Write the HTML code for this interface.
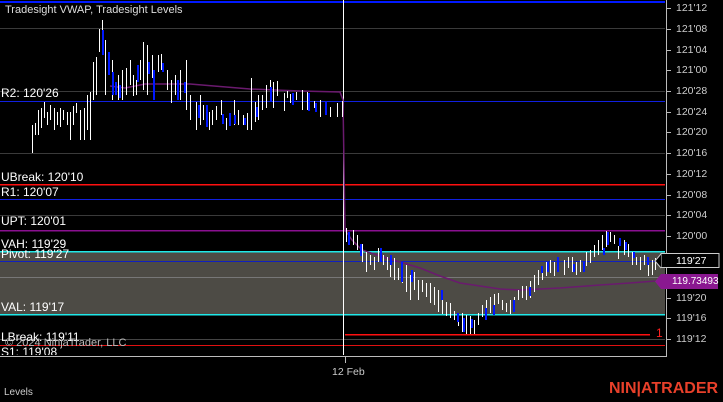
<!DOCTYPE html>
<html><head><meta charset="utf-8"><style>
html,body{margin:0;padding:0;background:#000;}
body{width:723px;height:402px;overflow:hidden;position:relative;font-family:"Liberation Sans",sans-serif;}
.t{position:absolute;white-space:nowrap;}
</style></head><body>
<svg width="723" height="402" style="position:absolute;left:0;top:0">
<rect x="0" y="251" width="665" height="63" fill="#4d4b45"/>
<g stroke-width="1" shape-rendering="crispEdges">
<line x1="0" y1="2" x2="665" y2="2" stroke="#0018ff" stroke-width="2"/>
<line x1="0" y1="28.5" x2="665" y2="28.5" stroke="#3a3a3a"/>
<line x1="0" y1="91.5" x2="665" y2="91.5" stroke="#3a3a3a"/>
<line x1="0" y1="101.5" x2="665" y2="101.5" stroke="#1020e0"/>
<line x1="0" y1="153.5" x2="665" y2="153.5" stroke="#3a3a3a"/>
<line x1="0" y1="184.5" x2="665" y2="184.5" stroke="#ff1010" stroke-width="1.5"/>
<line x1="0" y1="199.5" x2="665" y2="199.5" stroke="#1020e0"/>
<line x1="0" y1="215.5" x2="665" y2="215.5" stroke="#3a3a3a"/>
<line x1="0" y1="230.5" x2="665" y2="230.5" stroke="#8a1090" stroke-width="1.5"/>
<line x1="0" y1="251.5" x2="665" y2="251.5" stroke="#20e8e8" stroke-width="1.5"/>
<line x1="0" y1="261.5" x2="665" y2="261.5" stroke="#1020c0"/>
<line x1="0" y1="277.5" x2="665" y2="277.5" stroke="#777"/>
<line x1="0" y1="314.5" x2="665" y2="314.5" stroke="#20e8e8" stroke-width="1.5"/>
<line x1="0" y1="339.5" x2="665" y2="339.5" stroke="#444"/>
<line x1="0" y1="345.5" x2="665" y2="345.5" stroke="#e01010"/>
<line x1="345" y1="334.5" x2="650" y2="334.5" stroke="#ff1010" stroke-width="1.5"/>
<line x1="343.5" y1="0" x2="343.5" y2="355" stroke="#fff"/>
<line x1="0" y1="356.5" x2="666" y2="356.5" stroke="#bbb"/>
<line x1="666.5" y1="0" x2="666.5" y2="357" stroke="#bbb"/>
<line x1="345.5" y1="357" x2="345.5" y2="363" stroke="#bbb"/>
</g>
<g stroke="#bbb" shape-rendering="crispEdges">
<line x1="667" y1="8.5" x2="671" y2="8.5"/><line x1="667" y1="29.5" x2="671" y2="29.5"/><line x1="667" y1="50.5" x2="671" y2="50.5"/><line x1="667" y1="70.5" x2="671" y2="70.5"/><line x1="667" y1="91.5" x2="671" y2="91.5"/><line x1="667" y1="112.5" x2="671" y2="112.5"/><line x1="667" y1="132.5" x2="671" y2="132.5"/><line x1="667" y1="153.5" x2="671" y2="153.5"/><line x1="667" y1="174.5" x2="671" y2="174.5"/><line x1="667" y1="195.5" x2="671" y2="195.5"/><line x1="667" y1="215.5" x2="671" y2="215.5"/><line x1="667" y1="236.5" x2="671" y2="236.5"/><line x1="667" y1="298.5" x2="671" y2="298.5"/><line x1="667" y1="318.5" x2="671" y2="318.5"/><line x1="667" y1="339.5" x2="671" y2="339.5"/>
</g>
<polyline fill="none" stroke="#6a1a6e" stroke-width="1.5" points="110,86 125,88 145,84 190,84 250,89 300,91 340,92 343,100 345,230 352,240 362,250 380,256 400,262 420,268 440,276 460,283 480,286 500,289 520,290 560,288 600,285 630,283 655,281"/>
<g stroke="#fff" stroke-width="1" shape-rendering="crispEdges" transform="translate(0.5,0)">
<path d="M32 125V153M35 123V135M38 110V135M41 108V128M44 102V118M47 112V125M50 105V120M54 108V130M57 112V125M60 108V127M63 110V120M67 112V125M70 112V140M73 106V125M76 103V113M80 110V140M84 108V140M87 95V130M90 92V140M93 62V100M96 57V95M99 29V52M102 20V45M105 40V95M112 60V100M118 75V100M122 70V100M126 68V95M130 60V85M133 75V96M136 80V95M140 60V80M143 42V90M147 45V95M152 55V78M158 55V72M161 54V70M167 70V90M171 80V103M175 75V95M180 70V100M186 60V110M190 95V120M196 102V130M200 95V125M203 105V120M209 112V130M212 110V125M216 106V120M221 100V115M226 118V130M234 100V125M238 110V125M243 115V125M247 113V130M251 78V130M255 102V122M258 95V120M262 95V110M266 85V108M270 80V100M273 82V108M277 81V96M284 93V111M287 91V98M290 94V103M296 92V100M302 90V110M307 92V110M314 101V108M320 100V117M330 107V117M337 103V117M342 101V117"/>
<path d="M346 228V242M349 232V245M353 230V245M357 235V250M362 244V262M366 252V272M370 255V265M374 257V270M378 248V262M383 255V265M387 257V270M390 260V277M394 258V280M398 268V280M402 270V283M406 265V292M410 275V300M414 272V290M418 280V300M422 280V292M426 283V297M430 283V303M434 287V305M438 290V312M442 297V314M446 302V316M450 303V318M454 311V320M458 314V326M462 313V332M466 315V334M470 316V334M474 320V334M478 313V325M482 305V317M486 300V315M490 297V313M494 294V307M498 293V304M502 300V310M506 303V312M510 300V314M514 297V312M518 290V300M522 286V298M526 286V300M530 281V298M534 275V292M538 270V285M542 268V280M546 262V276M550 260V273M554 262V276M558 259V269M564 260V275M568 257V268M572 257V272M576 262V275M580 260V272M586 252V266M590 250V263M594 245V257M598 240V255M602 235V250M606 231V247M610 232V242M614 235V244M618 246V259M624 240V255M628 244V257M632 252V265M636 257V265M640 257V270M644 255V265M648 265V276M652 260V275M655 258V270"/>
</g>
<g stroke="#0018ff" stroke-width="2" shape-rendering="crispEdges">
<path d="M103 30V55M109 52V75M113 72V95M116 82V95M120 85V98M138 65V82M149 62V74M154 70V100M163 63V72M178 80V100M185 82V93M199 105V118M207 105V127M223 114V124M230 113V126M235 115V124M245 118V125M257 107V117M271 87V102M293 93V105M309 93V111M316 103V112M326 102V115"/>
<path d="M349 232V245M361 244V256M381 248V262M391 255V265M402 262V282M412 270V282M442 290V300M458 313V322M464 318V332M472 319V328M486 308V320M494 305V315M514 300V312M530 287V296M542 266V273M548 262V272M558 257V272M574 264V272M584 262V272M604 248V255M608 232V245M620 238V246M626 242V250M634 252V258M648 257V265"/>
</g>
<rect x="661" y="253.5" width="58" height="14" fill="#000" stroke="#ccc"/>
<path d="M661 254 L655 261 L661 268" fill="#000" stroke="#ccc"/>
<path d="M661 274 L655 281.5 L661 289 Z" fill="#8a1890"/>
<rect x="661" y="274" width="57" height="15" fill="#8a1890"/>
</svg>
<div class="t" style="left:5px;top:4px;font-size:11px;color:#ddd">Tradesight VWAP, Tradesight Levels</div>
<div class="t" style="left:1px;top:86px;font-size:12px;color:#fff">R2: 120'26</div>
<div class="t" style="left:1px;top:170px;font-size:12px;color:#fff">UBreak: 120'10</div>
<div class="t" style="left:1px;top:185px;font-size:12px;color:#fff">R1: 120'07</div>
<div class="t" style="left:1px;top:214px;font-size:12px;color:#fff">UPT: 120'01</div>
<div class="t" style="left:1px;top:237px;font-size:12px;color:#fff">VAH: 119'29</div>
<div class="t" style="left:1px;top:247px;font-size:12px;color:#fff">Pivot: 119'27</div>
<div class="t" style="left:1px;top:300px;font-size:12px;color:#fff">VAL: 119'17</div>
<div class="t" style="left:1px;top:330px;font-size:12px;color:#fff">LBreak: 119'11</div>
<div class="t" style="left:5px;top:337px;font-size:11px;color:#bbb">© 2024 NinjaTrader, LLC</div>
<div class="t" style="left:1px;top:345px;font-size:12px;color:#fff;height:10px;overflow:hidden">S1: 119'08</div>
<div class="t" style="left:656px;top:326px;font-size:12px;color:#ff2020">1</div>
<div style="position:absolute;left:676px;top:0;font-size:10.5px;color:#ccc;line-height:1">
<div class="t" style="top:3px">121'12</div><div class="t" style="top:24px">121'08</div><div class="t" style="top:45px">121'04</div><div class="t" style="top:65px">121'00</div><div class="t" style="top:86px">120'28</div><div class="t" style="top:107px">120'24</div><div class="t" style="top:127px">120'20</div><div class="t" style="top:148px">120'16</div><div class="t" style="top:169px">120'12</div><div class="t" style="top:190px">120'08</div><div class="t" style="top:210px">120'04</div><div class="t" style="top:231px">120'00</div><div class="t" style="top:293px">119'20</div><div class="t" style="top:313px">119'16</div><div class="t" style="top:334px">119'12</div>
</div>
<div class="t" style="left:676px;top:255px;font-size:10.5px;color:#fff">119'27</div>
<div class="t" style="left:672px;top:276px;font-size:10px;color:#fff">119.73493</div>
<div class="t" style="left:332px;top:366px;font-size:10.5px;color:#ccc">12 Feb</div>
<div class="t" style="left:4px;top:387px;font-size:10px;color:#ccc">Levels</div>
<div class="t" style="left:609px;top:380px;font-size:16px;font-weight:bold;color:#e8402a;letter-spacing:0">NIN|ATRADER</div>
</body></html>
